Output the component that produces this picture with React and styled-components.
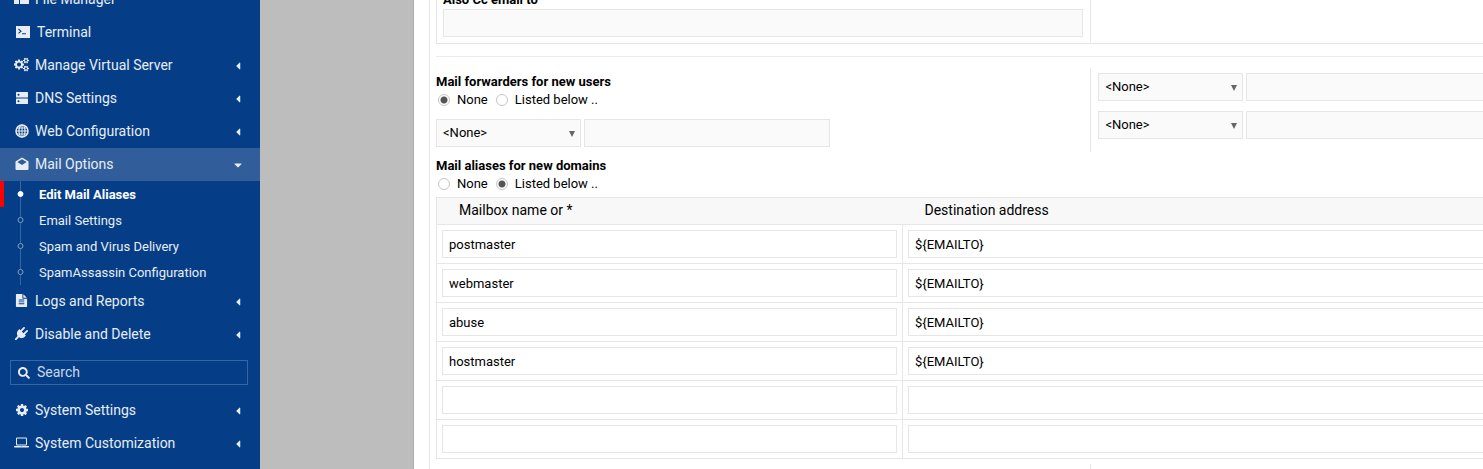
import React, { useId, useState } from 'react';
import styled, { createGlobalStyle } from 'styled-components';
import { FaCaretDown, FaCaretLeft, FaSearch } from 'react-icons/fa';

const colors = {
	sidebar: '#053e87',
	sidebarActive: '#315e9b',
	sidebarLine: '#3667a3',
	sidebarText: '#e8edf4',
	backdrop: '#bdbdbd',
	border: '#e6e6e6',
	field: '#fafafa',
	head: '#f8f8f8',
	marker: '#ff0000',
};

const GlobalStyle = createGlobalStyle`
	*, *::before, *::after {
		box-sizing: border-box;
	}

	body {
		margin: 0;
		background: #fff;
		color: #000;
		font: 13px/18px Roboto, "Liberation Sans", sans-serif;
	}

	input, select, button {
		font: inherit;
		color: inherit;
	}
`;

const Page = styled.div`
	display: flex;
	height: 100vh;
	overflow: hidden;
`;

const Sidebar = styled.nav`
	flex: 0 0 260px;
	background: ${colors.sidebar};
	color: ${colors.sidebarText};
	overflow: hidden;
`;

/* the menu is scrolled half a row down */
const Menu = styled.div`
	margin-top: -17px;
`;

const MenuButton = styled.button`
	display: flex;
	align-items: center;
	gap: 6px;
	width: 100%;
	height: 33px;
	padding: 0 17px 2px 14px;
	border: 0;
	background: ${({ $open }) => ($open ? colors.sidebarActive : 'transparent')};
	font-size: 14px;
	text-align: left;
	cursor: pointer;
`;

const MenuIcon = styled.span`
	display: flex;
	flex: 0 0 ${({ $wide }) => ($wide ? 17 : 15)}px;
	min-width: 0;
	justify-content: center;

	svg {
		width: ${({ $size }) => $size || 14}px;
		height: ${({ $size }) => $size || 14}px;
		flex: none;
	}
`;

const MenuLabel = styled.span`
	flex: 1;
`;

const Arrow = styled.span`
	display: flex;
	justify-content: center;
	width: 10px;
	padding-top: 2px;
	font-size: 12px;
`;

const SubMenu = styled.ul`
	margin: 0;
	padding: 0;
	list-style: none;
`;

const SubItem = styled.li`
	display: flex;
	height: 26px;
	border-left: 4px solid ${({ $active }) => ($active ? colors.marker : 'transparent')};
`;

const SubLink = styled.a`
	display: flex;
	align-items: center;
	gap: 15px;
	padding-left: 13px;
	color: ${({ $active }) => ($active ? '#fff' : 'inherit')};
	font-weight: ${({ $active }) => ($active ? 700 : 400)};
	line-height: 20px;
	text-decoration: none;
`;

const SubLabel = styled.span`
	padding-top: 2px;
`;

const Bullet = styled.svg`
	width: 7px;
	height: 26px;
	flex: none;
`;

const SearchBox = styled.label`
	display: flex;
	align-items: center;
	gap: 7px;
	height: 25px;
	margin: 9px 12px 9px 10px;
	padding: 0 7px;
	border: 1px solid ${colors.sidebarLine};
	font-size: 14px;
`;

const SearchInput = styled.input`
	flex: 1;
	min-width: 0;
	padding: 0 0 2px;
	border: 0;
	outline: 0;
	background: transparent;

	&::placeholder {
		color: #cdd8e7;
		opacity: 1;
	}
`;

const Backdrop = styled.div`
	flex: 0 0 154px;
	background: ${colors.backdrop};
	border-right: 1px solid #adadad;
`;

const Main = styled.main`
	flex: 1;
	min-width: 0;
	padding-left: 15px;
	overflow: hidden;
`;

const Panel = styled.div`
	min-height: 100vh;
	padding-left: 6px;
	border-left: 1px solid ${colors.border};
`;

/* wider than the window, the right part scrolls out of view */
const Form = styled.form`
	width: 125%;
	margin-top: -16px;
`;

const Split = styled.div`
	display: grid;
	grid-template-columns: 1fr 1fr;
`;

const CcGroup = styled(Split)`
	padding-bottom: 1px;
	border: 1px solid ${colors.border};
`;

const CcCell = styled.div`
	display: flex;
	flex-direction: column;
	padding: 6px 7px 5px 6px;
`;

const RightCell = styled.div`
	display: flex;
	flex-direction: column;
	gap: 10px;
	padding: 5px 7px 13px;
	border-left: 1px solid ${colors.border};
`;

const LeftCell = styled.div`
	display: flex;
	flex-direction: column;
	padding-top: 5px;
`;

const Rule = styled.hr`
	height: 1px;
	margin: 12px 0 11px;
	border: 0;
	background: #ececec;
`;

const Title = styled.span`
	font-weight: 700;
`;

const TextField = styled.input`
	width: ${({ $width }) => $width || '100%'};
	height: 28px;
	padding: 0 6px;
	border: 1px solid ${colors.border};
	border-radius: 0;
	outline: 0;
	background: ${({ $muted }) => ($muted ? colors.field : '#fff')};
`;

const Radios = styled.div`
	display: flex;
	align-items: center;
	gap: 8px;
	height: 18px;
	padding-left: 2px;
`;

const RadioLabel = styled.label`
	display: flex;
	align-items: center;
	gap: 7px;
`;

const RadioInput = styled.input`
	appearance: none;
	width: 12px;
	height: 12px;
	margin: 0;
	border: 1px solid #c6c6c6;
	border-radius: 50%;
	background: #fff;

	&:checked {
		background: radial-gradient(circle, #555 0 3px, #fff 4px);
	}
`;

const ForwarderSlot = styled.div`
	margin-top: 10px;
`;

const Forwarder = styled.div`
	display: flex;
	gap: 3px;
`;

const SelectWrap = styled.div`
	position: relative;
	flex: 0 0 145px;

	svg {
		position: absolute;
		top: 12px;
		right: 6px;
		pointer-events: none;
	}
`;

const Select = styled.select`
	appearance: none;
	width: 100%;
	height: 28px;
	padding: 0 6px;
	border: 1px solid ${colors.border};
	border-radius: 0;
	background: ${colors.field};
`;

const AliasHead = styled.div`
	padding: 5px 0 4px;
`;

const AliasTable = styled.table`
	width: 100%;
	table-layout: fixed;
	border-collapse: collapse;
	border: 1px solid ${colors.border};
`;

const HeadCell = styled.th`
	width: ${({ $width }) => $width || 'auto'};
	height: 27px;
	padding: 0 22px 2px;
	background: ${colors.head};
	font-size: 14px;
	font-weight: 400;
	text-align: left;
`;

const Cell = styled.td`
	height: 39px;
	padding: 5px;
	border: 1px solid ${colors.border};
	line-height: 0;
`;

const NextRow = styled(Split)`
	height: 40px;
	margin-top: 5px;
`;

const ManagerIcon = () => (
	<svg viewBox="0 0 15 15" fill="currentColor">
		<path d="M0 2h5v11H0zM6 2h9v5H6zM6 8h9v5H6z" />
	</svg>
);

const TerminalIcon = () => (
	<svg viewBox="0 0 14 14" fill="none">
		<path d="M0 1h14v12H0z" fill="currentColor" />
		<path d="M2.500 4l2.500 2.200-2.500 2.200M6 8.800h4" stroke={colors.sidebar} strokeWidth="1.100" />
	</svg>
);

const SMALL_COG =
	'v140q0 16-149 31-12 27-30 52 51 113 51 138 0 4-4 7-122 71-124 71-8 0-46-47t-52-68q-20 2-30 2t-30-2q-14 21-52 68t-46 47q-2 0-124-71-4-3-4-7 0-25 51-138-18-25-30-52-149-15-149-31v-140q0-16 149-31 13-29 30-52-51-113-51-138 0-4 4-7 4-2 35-20t59-34 30-16q8 0 46 46.500t52 67.500q20-2 30-2t30 2q51-71 92-112l6-2q4 0 124 70 4 3 4 7 0 25-51 138 17 23 30 52 149 15 149 31z';

const CogsIcon = () => (
	<svg viewBox="0 0 1920 1792" fill="currentColor" fillRule="evenodd">
		<path d="M896 896q0-106-75-181t-181-75-181 75-75 181 75 181 181 75 181-75 75-181zm384-91v185q0 10-7 19.500t-16 10.500l-155 24q-11 35-32 76 34 48 90 115 7 11 7 20 0 12-7 19-23 30-82.500 89.500t-78.500 59.500q-11 0-21-7l-115-90q-37 19-77 31-11 108-23 155-7 24-30 24h-186q-11 0-20-7.500t-10-17.500l-23-153q-34-10-75-31l-118 89q-7 7-20 7-11 0-21-8-144-133-144-160 0-9 7-19 10-14 41-53t47-61q-23-44-35-82l-152-24q-10-1-17-9.500t-7-19.500v-185q0-10 7-19.500t16-10.500l155-24q11-35 32-76-34-48-90-115-7-11-7-20 0-12 7-20 22-30 82-89t79-59q11 0 21 7l115 90q34-18 77-32 11-108 23-154 7-24 30-24h186q11 0 20 7.500t10 17.500l23 153q34 10 75 31l118-89q8-7 20-7 11 0 21 8 144 133 144 160 0 8-7 19-12 16-42 54t-45 60q23 48 34 82l152 23q10 2 17 10.500t7 19.500z" />
		<path d={`M1664 1408q0-52-38-90t-90-38-90 38-38 90q0 53 37.500 90.500t90.500 37.500 90.500-37.500 37.500-90.500zM1920 1338${SMALL_COG}`} />
		<path d={`M1664 384q0-52-38-90t-90-38-90 38-38 90q0 53 37.500 90.500t90.500 37.500 90.500-37.500 37.500-90.500zM1920 314${SMALL_COG}`} />
	</svg>
);

const ServerIcon = () => (
	<svg viewBox="0 0 14 14" fill="currentColor">
		<rect x="1" y="1" width="12" height="5.500" rx=".6" />
		<rect x="1" y="7.500" width="12" height="5.500" rx=".6" />
		<g fill={colors.sidebar}>
			<circle cx="3.500" cy="3.700" r="1" />
			<circle cx="3.500" cy="10.200" r="1" />
		</g>
	</svg>
);

const GlobeIcon = () => (
	<svg viewBox="0 0 14 14" fill="none" stroke="currentColor" strokeWidth="1.200">
		<circle cx="7" cy="7" r="6" strokeWidth="1.500" />
		<ellipse cx="7" cy="7" rx="3" ry="6" />
		<path d="M7 1v12M1 7h12M2 4h10M2 10h10" strokeWidth="1" />
	</svg>
);

const MailIcon = () => (
	<svg viewBox="0 0 14 14" fill="currentColor">
		<path d="M7 .5l6.200 3.700q.3.200.3.600v7.200q0 1-1 1h-11q-1 0-1-1V4.800q0-.4.3-.6z" />
		<path d="M7 2.300l4.700 2.700L7 8 2.300 5z" fill={colors.sidebarActive} />
	</svg>
);

const FileIcon = () => (
	<svg viewBox="0 0 1792 1792" fill="currentColor">
		<path d="M1596 476q14 14 28 36h-472v-472q22 14 36 28zm-476 164h544v1056q0 40-28 68t-68 28h-1344q-40 0-68-28t-28-68v-1600q0-40 28-68t68-28h800v544q0 40 28 68t68 28zm160 736v-64q0-14-9-23t-23-9h-704q-14 0-23 9t-9 23v64q0 14 9 23t23 9h704q14 0 23-9t9-23zm0-256v-64q0-14-9-23t-23-9h-704q-14 0-23 9t-9 23v64q0 14 9 23t23 9h704q14 0 23-9t9-23zm0-256v-64q0-14-9-23t-23-9h-704q-14 0-23 9t-9 23v64q0 14 9 23t23 9h704q14 0 23-9t9-23z" />
	</svg>
);

const PlugIcon = () => (
	<svg viewBox="0 0 1792 1792" fill="currentColor">
		<path d="M1755 453q37 38 37 90.500t-37 90.500l-401 400 150 150-160 160q-163 163-389.500 186.500t-411.500-100.500l-362 362h-181v-181l362-362q-124-185-100.500-411.500t186.500-389.500l160-160 150 150 400-401q38-37 91-37t90 37 37 90.500-37 90.500l-400 401 234 234 401-400q38-37 91-37t90 37z" />
	</svg>
);

const CogIcon = () => (
	<svg viewBox="0 0 1792 1792" fill="currentColor">
		<path d="M1152 896q0-106-75-181t-181-75-181 75-75 181 75 181 181 75 181-75 75-181zm512-109v222q0 12-8 23t-20 13l-185 28q-19 54-39 91 35 50 107 138 10 12 10 25t-9 23q-27 37-99 108t-94 71q-12 0-26-9l-138-108q-44 23-91 38-16 136-29 186-7 28-36 28h-222q-14 0-24.500-8.500t-11.500-21.500l-28-184q-49-16-90-37l-141 107q-10 9-25 9-14 0-25-11-126-114-165-168-7-10-7-23 0-12 8-23 15-21 51-66.500t54-70.500q-27-50-41-99l-183-27q-13-2-21-12.500t-8-23.500v-222q0-12 8-23t19-13l186-28q14-46 39-92-40-57-107-138-10-12-10-24 0-10 9-23 26-36 98.500-107.500t94.500-71.500q13 0 26 10l138 107q44-23 91-38 16-136 29-186 7-28 36-28h222q14 0 24.500 8.500t11.500 21.500l28 184q49 16 90 37l142-107q9-9 24-9 13 0 25 10 129 119 165 170 7 8 7 22 0 12-8 23-15 21-51 66.500t-54 70.500q26 50 41 98l183 28q13 2 21 12.500t8 23.500z" />
	</svg>
);

const LaptopIcon = () => (
	<svg viewBox="0 0 1920 1792" fill="currentColor">
		<path d="M416 1280q-66 0-113-47t-47-113v-704q0-66 47-113t113-47h1088q66 0 113 47t47 113v704q0 66-47 113t-113 47h-1088zm-32-864v704q0 13 9.500 22.500t22.500 9.500h1088q13 0 22.500-9.500t9.500-22.500v-704q0-13-9.500-22.500t-22.500-9.500h-1088q-13 0-22.500 9.500t-9.500 22.500zm1376 928h160v96q0 40-47 68t-113 28h-1600q-66 0-113-28t-47-68v-96h1760zm-720 96q16 0 16-16t-16-16h-160q-16 0-16 16t16 16h160z" />
	</svg>
);

const serverMenu = [
	{ label: 'File Manager', icon: ManagerIcon, size: 15, plain: true },
	{ label: 'Terminal', icon: TerminalIcon, wide: true, plain: true },
	{ label: 'Manage Virtual Server', icon: CogsIcon, size: 15 },
	{ label: 'DNS Settings', icon: ServerIcon },
	{ label: 'Web Configuration', icon: GlobeIcon },
	{
		label: 'Mail Options',
		icon: MailIcon,
		items: ['Edit Mail Aliases', 'Email Settings', 'Spam and Virus Delivery', 'SpamAssassin Configuration'],
	},
	{ label: 'Logs and Reports', icon: FileIcon, size: 13 },
	{ label: 'Disable and Delete', icon: PlugIcon, size: 13 },
];

const systemMenu = [
	{ label: 'System Settings', icon: CogIcon },
	{ label: 'System Customization', icon: LaptopIcon, size: 15 },
];

const aliases = ['postmaster', 'webmaster', 'abuse', 'hostmaster', '', ''];

const MenuEntry = ({ label, icon: Icon, size, wide, plain, items }) => (
	<>
		<MenuButton type="button" $open={!!items}>
			<MenuIcon $size={size} $wide={wide}>
				<Icon />
			</MenuIcon>
			<MenuLabel>{label}</MenuLabel>
			{!plain && <Arrow>{items ? <FaCaretDown /> : <FaCaretLeft />}</Arrow>}
		</MenuButton>
		{items && (
			<SubMenu>
				{items.map((item, i) => (
					<SubItem key={item} $active={i === 0}>
						<SubLink href="#" $active={i === 0}>
							<Bullet viewBox="0 0 7 26">
								<path d="M3.500 0v26" stroke={colors.sidebarLine} />
								<circle
									cx="3.500"
									cy="13"
									r="2.500"
									fill={i === 0 ? '#fff' : colors.sidebar}
									stroke={i === 0 ? '#fff' : '#7f9fc6'}
								/>
							</Bullet>
							<SubLabel>{item}</SubLabel>
						</SubLink>
					</SubItem>
				))}
			</SubMenu>
		)}
	</>
);

const ForwarderRow = ({ name, width }) => (
	<Forwarder>
		<SelectWrap>
			<Select aria-label={`${name} type`}>
				<option>&lt;None&gt;</option>
			</Select>
			<svg width="6" height="6" viewBox="0 0 6 6" fill="#666">
				<path d="M0 0h6L3 6z" />
			</svg>
		</SelectWrap>
		<TextField $muted $width={width} aria-label={`${name} value`} />
	</Forwarder>
);

const ModeRadios = ({ name, initial }) => {
	const [mode, setMode] = useState(initial);
	return (
		<Radios>
			{['None', 'Listed below ..'].map((label, i) => (
				<RadioLabel key={label}>
					<RadioInput type="radio" name={name} checked={mode === i} onChange={() => setMode(i)} />
					{label}
				</RadioLabel>
			))}
		</Radios>
	);
};

export default function App() {
	const ccId = useId();
	return (
		<>
			<GlobalStyle />
			<Page>
				<Sidebar>
					<Menu>
						{serverMenu.map(entry => (
							<MenuEntry key={entry.label} {...entry} />
						))}
						<SearchBox>
							<FaSearch size={12} />
							<SearchInput placeholder="Search" aria-label="Search" />
						</SearchBox>
						{systemMenu.map(entry => (
							<MenuEntry key={entry.label} {...entry} />
						))}
					</Menu>
				</Sidebar>
				<Backdrop />
				<Main>
					<Panel>
						<Form>
							<CcGroup>
								<CcCell>
									<Title as="label" htmlFor={ccId}>Also Cc email to</Title>
									<TextField $muted id={ccId} />
								</CcCell>
								<RightCell />
							</CcGroup>
							<Rule />
							<Split>
								<LeftCell>
									<Title>Mail forwarders for new users</Title>
									<ModeRadios name="forwarders" initial={0} />
									<ForwarderSlot>
										<ForwarderRow name="Forwarder 1" width="246px" />
									</ForwarderSlot>
								</LeftCell>
								<RightCell>
									<ForwarderRow name="Forwarder 2" />
									<ForwarderRow name="Forwarder 3" />
								</RightCell>
							</Split>
							<AliasHead>
								<Title>Mail aliases for new domains</Title>
								<ModeRadios name="aliases" initial={1} />
							</AliasHead>
							<AliasTable>
								<thead>
									<tr>
										<HeadCell $width="466px">Mailbox name or *</HeadCell>
										<HeadCell>Destination address</HeadCell>
									</tr>
								</thead>
								<tbody>
									{aliases.map((alias, i) => (
										<tr key={i}>
											<Cell>
												<TextField defaultValue={alias} aria-label={`Mailbox ${i + 1}`} />
											</Cell>
											<Cell>
												<TextField
													defaultValue={alias && '${EMAILTO}'}
													aria-label={`Destination ${i + 1}`}
												/>
											</Cell>
										</tr>
									))}
								</tbody>
							</AliasTable>
							<NextRow>
								<div />
								<RightCell />
							</NextRow>
						</Form>
					</Panel>
				</Main>
			</Page>
		</>
	);
}
